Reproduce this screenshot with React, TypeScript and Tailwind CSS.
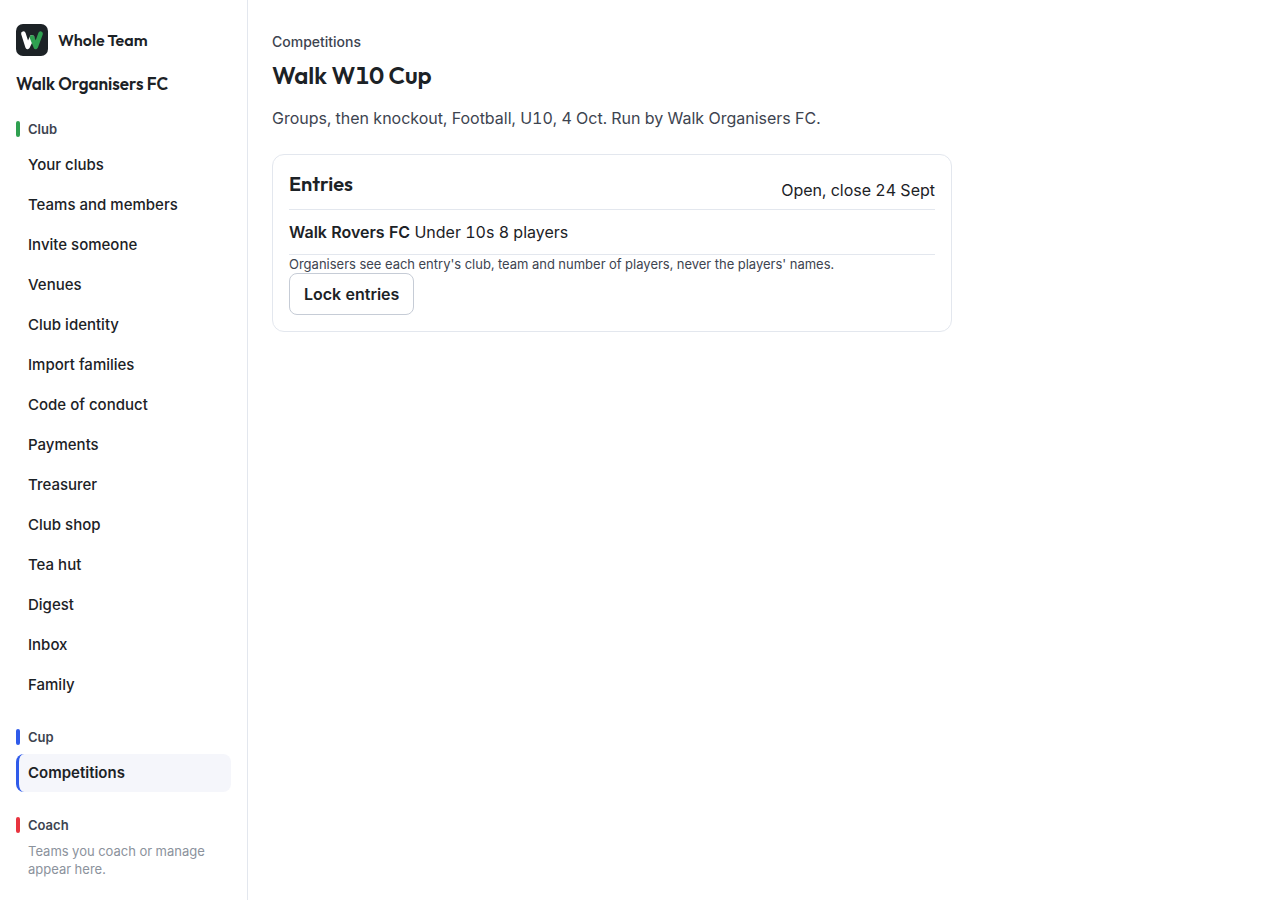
import type { ReactNode } from "react";

const clubLinks = [
  "Your clubs",
  "Teams and members",
  "Invite someone",
  "Venues",
  "Club identity",
  "Import families",
  "Code of conduct",
  "Payments",
  "Treasurer",
  "Club shop",
  "Tea hut",
  "Digest",
  "Inbox",
  "Family",
];

function Logo() {
  return (
    <svg viewBox="0 0 32 32" className="size-8 shrink-0" aria-hidden="true">
      <rect width="32" height="32" rx="7" fill="#1c2226" />
      <g fill="none" strokeWidth="4.6" strokeLinecap="round" strokeLinejoin="round">
        <path d="M7.4 9.6 L11.6 22.8 L16 13.4" stroke="#ffffff" />
        <path d="M16 13.4 L19.8 22.8 L24.6 9.6" stroke="#2fa050" />
      </g>
    </svg>
  );
}

function Section({ title, bar, children }: { title: string; bar: string; children: ReactNode }) {
  return (
    <section className="flex flex-col gap-2">
      <h2 className="flex items-center gap-2 text-[13px] leading-[18px] font-semibold text-[#3d4450]">
        <span className={`h-4 w-1 rounded-[2px] ${bar}`} />
        {title}
      </h2>
      {children}
    </section>
  );
}

function NavLink({ label, active = false }: { label: string; active?: boolean }) {
  return (
    <a
      href="#"
      aria-current={active ? "page" : undefined}
      className={`block rounded-lg border-l-[3px] py-2 pr-3 pl-[9px] text-[15px] leading-[22px] ${
        active ? "border-[#2f5bea] bg-[#f5f6fb] font-semibold" : "border-transparent font-medium"
      }`}
    >
      {label}
    </a>
  );
}

export default function App() {
  return (
    <div className="flex min-h-screen bg-white font-['Inter',sans-serif] text-base text-[#1c2226] tabular-nums">
      <aside className="flex w-[248px] shrink-0 flex-col gap-6 border-r border-[#e3e7ee] px-4 pt-6 pb-5">
        <div className="flex flex-col gap-4 font-['Outfit','Lato',sans-serif] font-semibold">
          <a href="#" className="flex items-center gap-2.5 text-base">
            <Logo />
            Whole Team
          </a>
          <p className="text-[17px] leading-6">Walk Organisers FC</p>
        </div>
        <nav className="flex flex-col gap-6">
          <Section title="Club" bar="bg-[#2fa050]">
            <ul className="flex flex-col gap-0.5">
              {clubLinks.map((label) => (
                <li key={label}>
                  <NavLink label={label} />
                </li>
              ))}
            </ul>
          </Section>
          <Section title="Cup" bar="bg-[#2f5bea]">
            <NavLink label="Competitions" active />
          </Section>
          <Section title="Coach" bar="bg-[#e8343f]">
            <p className="px-3 text-[13px] leading-[18px] text-[#8b929c]">
              Teams you coach or manage appear here.
            </p>
          </Section>
        </nav>
      </aside>

      <main className="min-w-0 flex-1 px-6 py-8">
        <a href="#" className="block text-sm font-medium text-[#3d4450]">
          Competitions
        </a>
        <h1 className="mt-2 font-['Outfit','Lato',sans-serif] text-2xl leading-[30px] font-semibold">
          Walk W10 Cup
        </h1>
        <p className="mt-4 text-[#3d4450]">
          Groups, then knockout, Football, U10, 4 Oct. Run by Walk Organisers FC.
        </p>

        <section className="mt-6 max-w-[680px] rounded-xl border border-[#e3e7ee] p-4">
          <div className="flex items-center justify-between">
            <h2 className="mb-3 font-['Outfit','Lato',sans-serif] text-xl leading-[26px] font-semibold">
              Entries
            </h2>
            <span>Open, close 24 Sept</span>
          </div>
          <ul>
            <li className="border-y border-[#e3e7ee] py-2.5">
              <strong className="font-semibold">Walk Rovers FC</strong> Under 10s 8 players
            </li>
          </ul>
          <p className="text-[13px] leading-[18px] text-[#3d4450]">
            Organisers see each entry's club, team and number of players, never the players' names.
          </p>
          <button
            type="button"
            className="rounded-lg border border-[#c6ccd6] bg-white px-3.5 py-2 font-semibold"
          >
            Lock entries
          </button>
        </section>
      </main>
    </div>
  );
}
